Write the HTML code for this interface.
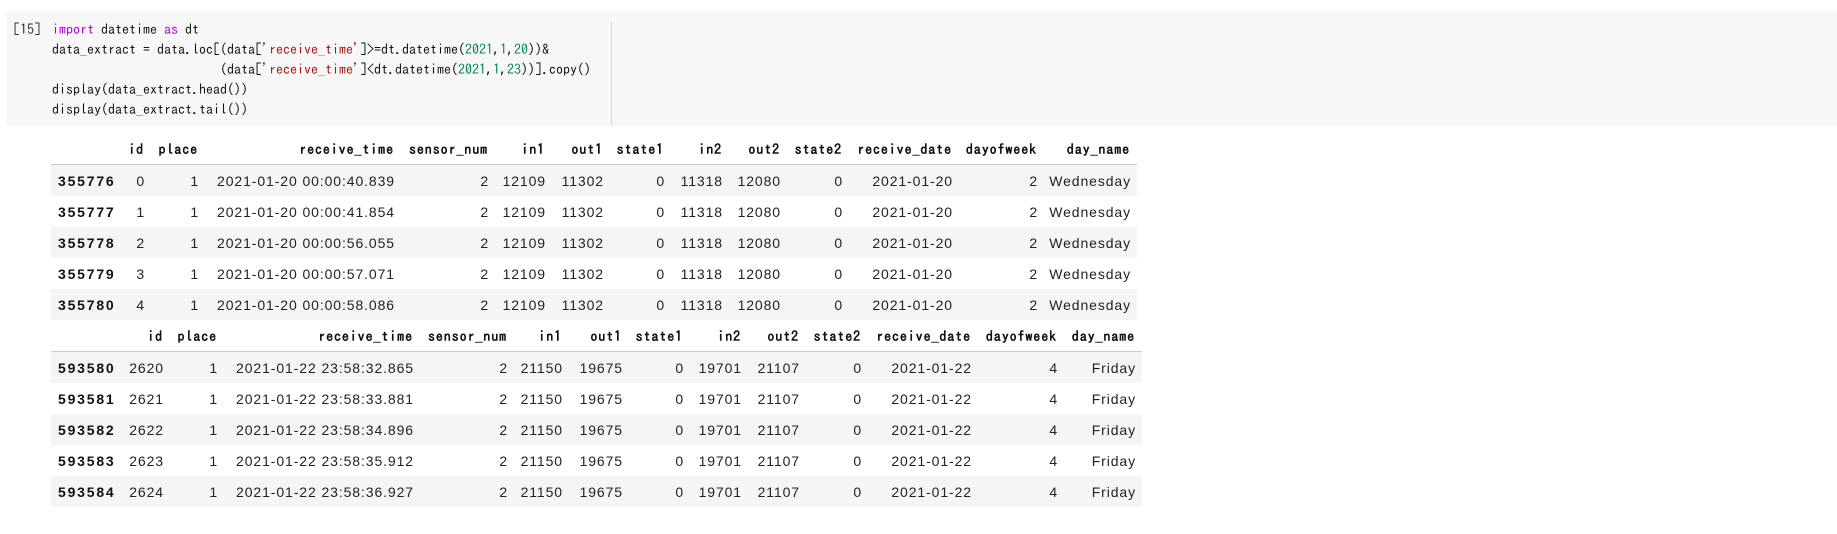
<!DOCTYPE html>
<html><head><meta charset="utf-8"><style>
body{margin:0;width:1837px;height:534px;background:#fff;position:relative;overflow:hidden}
.band{position:absolute;left:6px;top:12px;width:1831px;height:114px;background:#f7f7f7}
.sep{position:absolute;left:611px;top:21px;width:1px;height:105px;background:#dadada}
.num{position:absolute;left:13px;top:19px;font:14px/20px "IPAGothic","Liberation Mono",monospace;color:#333}
pre{position:absolute;left:52px;top:19px;margin:0;font:14px/20px "IPAGothic","Liberation Mono",monospace;color:#111}
.k{color:#af00db}.s{color:#a31515}.n{color:#098658}
table{position:absolute;left:51px;border-collapse:collapse;table-layout:fixed;font:14px "Liberation Sans",sans-serif;color:#222}
th{font:bold 14px "IPAGothic","Liberation Mono",monospace;letter-spacing:0.9px;text-align:right;padding:0 7px 0 0;height:30px;border-bottom:1px solid #ccc;color:#111;white-space:nowrap;overflow:visible}
td{text-align:right;padding:0 6px 0 0;height:31px;white-space:nowrap;letter-spacing:0.9px;overflow:visible}
td:first-child{text-align:left;padding-left:7px;font-weight:bold;color:#111;letter-spacing:1.8px}
tbody tr:nth-child(odd){background:#f5f5f5}
</style></head><body>
<div class="band"></div><div class="sep"></div>
<div class="num">[15]</div>
<pre><span class="k">import</span> datetime <span class="k">as</span> dt
data_extract = data.loc[(data[<span class="s">'receive_time'</span>]&gt;=dt.datetime(<span class="n">2021</span>,<span class="n">1</span>,<span class="n">20</span>))&amp;
                        (data[<span class="s">'receive_time'</span>]&lt;dt.datetime(<span class="n">2021</span>,<span class="n">1</span>,<span class="n">23</span>))].copy()
display(data_extract.head())
display(data_extract.tail())</pre>

<table style="top:134px;width:1086px">
<colgroup><col style="width:71px"><col style="width:29px"><col style="width:54px"><col style="width:196px"><col style="width:94px"><col style="width:57px"><col style="width:58px"><col style="width:61px"><col style="width:58px"><col style="width:58px"><col style="width:62px"><col style="width:110px"><col style="width:85px"><col style="width:93px"></colgroup>
<thead><tr><th></th><th>id</th><th>place</th><th>receive_time</th><th>sensor_num</th><th>in1</th><th>out1</th><th>state1</th><th>in2</th><th>out2</th><th>state2</th><th>receive_date</th><th>dayofweek</th><th>day_name</th></tr></thead>
<tbody>
<tr><td>355776</td><td>0</td><td>1</td><td>2021-01-20 00:00:40.839</td><td>2</td><td>12109</td><td>11302</td><td>0</td><td>11318</td><td>12080</td><td>0</td><td>2021-01-20</td><td>2</td><td>Wednesday</td></tr>
<tr><td>355777</td><td>1</td><td>1</td><td>2021-01-20 00:00:41.854</td><td>2</td><td>12109</td><td>11302</td><td>0</td><td>11318</td><td>12080</td><td>0</td><td>2021-01-20</td><td>2</td><td>Wednesday</td></tr>
<tr><td>355778</td><td>2</td><td>1</td><td>2021-01-20 00:00:56.055</td><td>2</td><td>12109</td><td>11302</td><td>0</td><td>11318</td><td>12080</td><td>0</td><td>2021-01-20</td><td>2</td><td>Wednesday</td></tr>
<tr><td>355779</td><td>3</td><td>1</td><td>2021-01-20 00:00:57.071</td><td>2</td><td>12109</td><td>11302</td><td>0</td><td>11318</td><td>12080</td><td>0</td><td>2021-01-20</td><td>2</td><td>Wednesday</td></tr>
<tr><td>355780</td><td>4</td><td>1</td><td>2021-01-20 00:00:58.086</td><td>2</td><td>12109</td><td>11302</td><td>0</td><td>11318</td><td>12080</td><td>0</td><td>2021-01-20</td><td>2</td><td>Wednesday</td></tr>
</tbody></table>

<table style="top:321px;width:1091px">
<colgroup><col style="width:71px"><col style="width:48px"><col style="width:54px"><col style="width:196px"><col style="width:94px"><col style="width:55px"><col style="width:60px"><col style="width:61px"><col style="width:58px"><col style="width:58px"><col style="width:62px"><col style="width:110px"><col style="width:86px"><col style="width:78px"></colgroup>
<thead><tr><th></th><th>id</th><th>place</th><th>receive_time</th><th>sensor_num</th><th>in1</th><th>out1</th><th>state1</th><th>in2</th><th>out2</th><th>state2</th><th>receive_date</th><th>dayofweek</th><th>day_name</th></tr></thead>
<tbody>
<tr><td>593580</td><td>2620</td><td>1</td><td>2021-01-22 23:58:32.865</td><td>2</td><td>21150</td><td>19675</td><td>0</td><td>19701</td><td>21107</td><td>0</td><td>2021-01-22</td><td>4</td><td>Friday</td></tr>
<tr><td>593581</td><td>2621</td><td>1</td><td>2021-01-22 23:58:33.881</td><td>2</td><td>21150</td><td>19675</td><td>0</td><td>19701</td><td>21107</td><td>0</td><td>2021-01-22</td><td>4</td><td>Friday</td></tr>
<tr><td>593582</td><td>2622</td><td>1</td><td>2021-01-22 23:58:34.896</td><td>2</td><td>21150</td><td>19675</td><td>0</td><td>19701</td><td>21107</td><td>0</td><td>2021-01-22</td><td>4</td><td>Friday</td></tr>
<tr><td>593583</td><td>2623</td><td>1</td><td>2021-01-22 23:58:35.912</td><td>2</td><td>21150</td><td>19675</td><td>0</td><td>19701</td><td>21107</td><td>0</td><td>2021-01-22</td><td>4</td><td>Friday</td></tr>
<tr><td>593584</td><td>2624</td><td>1</td><td>2021-01-22 23:58:36.927</td><td>2</td><td>21150</td><td>19675</td><td>0</td><td>19701</td><td>21107</td><td>0</td><td>2021-01-22</td><td>4</td><td>Friday</td></tr>
</tbody></table>
</body></html>
